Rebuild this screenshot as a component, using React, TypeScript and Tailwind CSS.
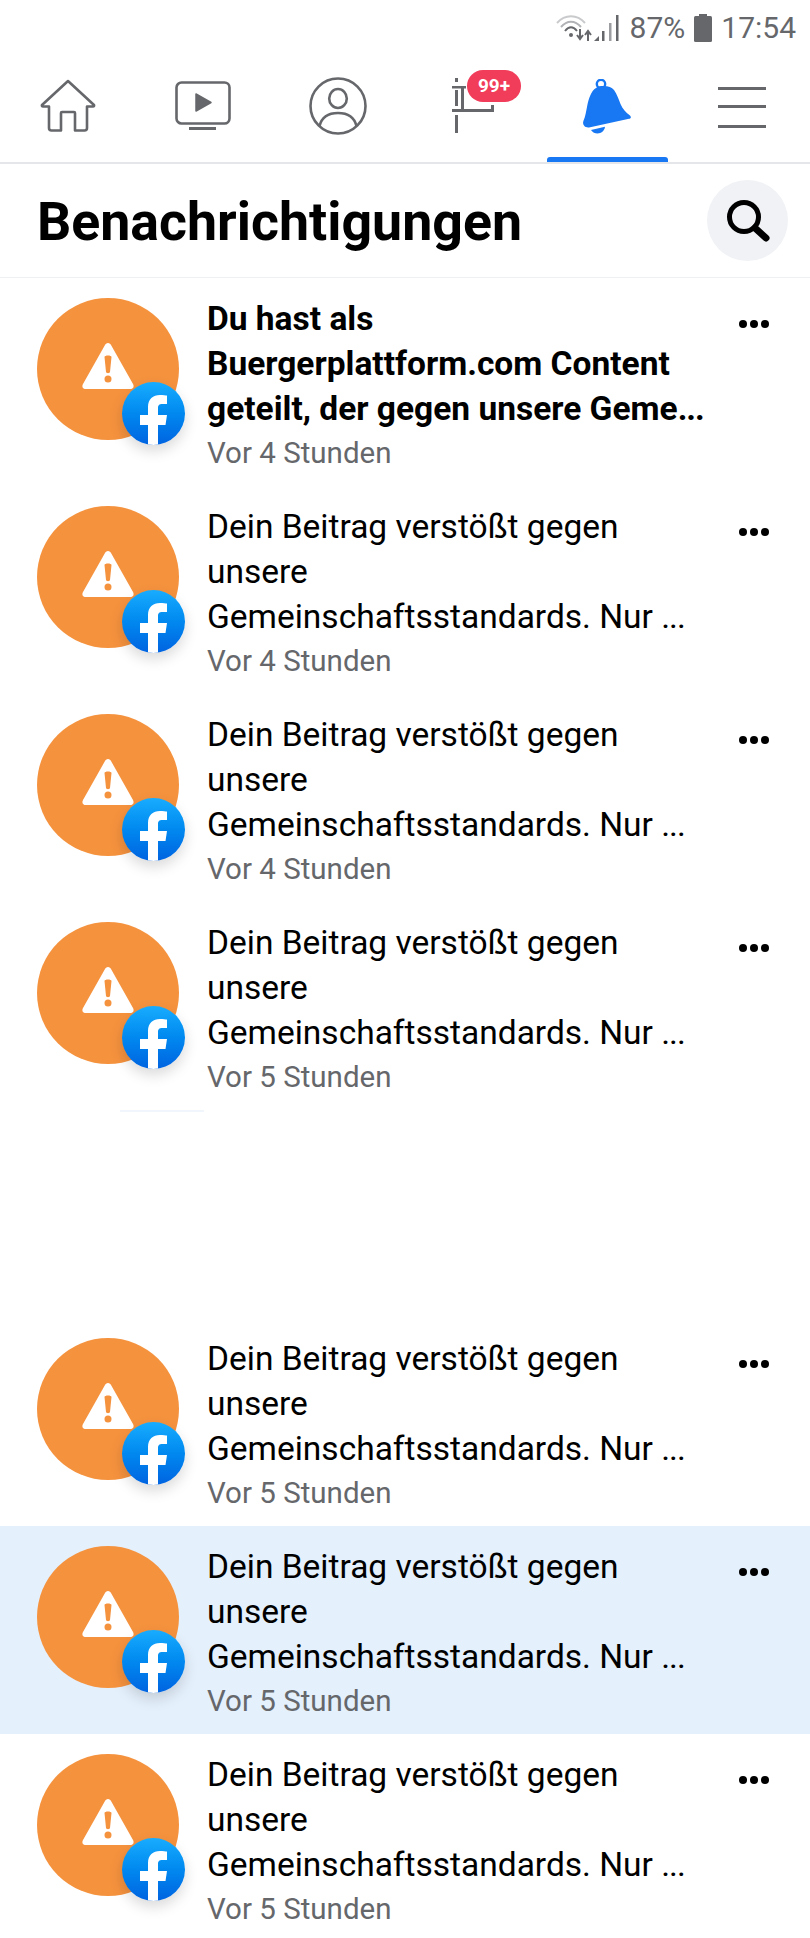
const ROWS = [
  { time: "Vor 4 Stunden", bold: true },
  { time: "Vor 4 Stunden" },
  { time: "Vor 4 Stunden" },
  { time: "Vor 5 Stunden" },
  null,
  { time: "Vor 5 Stunden" },
  { time: "Vor 5 Stunden", unread: true },
  { time: "Vor 5 Stunden" },
];

function HomeIcon() {
  return (
    <svg width="56" height="54" viewBox="0 0 56 54" fill="none" stroke="#65676b" strokeWidth="2.6" strokeLinejoin="round">
      <path d="M28 2 L54 26 Q54.500 27.500 53 27.500 L47 27.500 L47 49 Q47 51.500 44.500 51.500 L35 51.500 L35 34 Q35 33 34 33 L22 33 Q21 33 21 34 L21 51.500 L11.500 51.500 Q9 51.500 9 49 L9 27.500 L3 27.500 Q1.500 27.500 2 26 Z" />
    </svg>
  );
}

function VideoIcon() {
  return (
    <svg width="56" height="50" viewBox="0 0 56 50" fill="none">
      <rect x="1.500" y="1.500" width="53" height="41" rx="5" stroke="#65676b" strokeWidth="2.600" />
      <path d="M21 13 L36 21.500 L21 30 Z" fill="#65676b" stroke="#65676b" strokeWidth="1.500" strokeLinejoin="round" />
      <rect x="14" y="46" width="27" height="3" fill="#65676b" />
    </svg>
  );
}

function ProfileIcon() {
  return (
    <svg width="58" height="58" viewBox="0 0 58 58" fill="none" stroke="#65676b" strokeWidth="2.600">
      <circle cx="29" cy="29" r="27.500" />
      <ellipse cx="29" cy="21.500" rx="8.800" ry="9.500" />
      <path d="M10.500 49 C13 39 20 36 29 36 C38 36 45 39 47.500 49" />
    </svg>
  );
}

function FlagIcon() {
  // half loaded flag from the tab bar, only a few bars of it are visible
  return (
    <svg width="44" height="56" viewBox="0 0 44 56" fill="#65676b">
      <rect x="3" y="0" width="3" height="4" />
      <rect x="0" y="8" width="14" height="2.500" />
      <rect x="3" y="12" width="3" height="16" />
      <rect x="9" y="10" width="3" height="21" />
      <rect x="0" y="31" width="42" height="3" />
      <rect x="39" y="27" width="3" height="5" />
      <rect x="3" y="37" width="3" height="18" />
    </svg>
  );
}

function BellIcon() {
  return (
    <svg width="49" height="55" viewBox="0 0 49 55">
      <circle cx="18" cy="5" r="4.200" fill="none" stroke="#1877f2" strokeWidth="2.400" />
      <path
        fill="#1877f2"
        d="M18 7 C24 6.500 28.500 7.500 31 11 C34 15 35.500 20 37.500 25 C39.500 30 43 33.500 47 36.500 C48.500 38 48 39.500 46 39.800 L6 48.500 C1.500 49 -0.800 45.500 0.400 42 C2.500 37 3 33 4 28 C5.500 20 8 12 13 9 C14.500 8 16 7.200 18 7 Z"
      />
      <path fill="#1877f2" d="M8 51 L22 47.800 C21.500 52 18 54.500 14.500 54.500 C12 54.500 9.500 53.500 8 51 Z" />
    </svg>
  );
}

function MenuIcon() {
  return (
    <div className="flex flex-col w-[48px] mt-[2px] -ml-[2px]">
      <div className="h-[3px] bg-[#65676b]" />
      <div className="h-[3px] bg-[#65676b] mt-[15px]" />
      <div className="h-[3px] bg-[#65676b] mt-[17px]" />
    </div>
  );
}

function SearchIcon() {
  return (
    <svg width="46" height="46" viewBox="0 0 46 46" fill="none" stroke="#000">
      <circle cx="19" cy="19" r="14.500" strokeWidth="5" />
      <path d="M30 30 L41 40" strokeWidth="7" strokeLinecap="round" />
    </svg>
  );
}

function StatusBar() {
  return (
    <div className="h-[50px] flex items-center justify-end pr-[14px] pt-[6px] text-[#65676b] text-[30px] font-['Roboto',sans-serif]">
      <svg width="36" height="28" viewBox="0 0 36 28" fill="none" className="mr-[1px]">
        <path d="M1 9 C9 0 21 0 29 9" stroke="#c9cacc" strokeWidth="2" />
        <path d="M5 13 C11 6 19 6 25 13" stroke="#b0b2b5" strokeWidth="2" />
        <path d="M9 17 C13 12 17 12 21 17" stroke="#65676b" strokeWidth="2" />
        <circle cx="15" cy="21" r="2" fill="#65676b" />
        <path d="M24 15 V24 M21 21 L24 25 L27 21" stroke="#65676b" strokeWidth="2" />
        <path d="M32 27 V18 M29 21 L32 17 L35 21" stroke="#65676b" strokeWidth="2" />
      </svg>
      <svg width="28" height="28" viewBox="0 0 28 28" fill="#65676b" className="mr-[9px]">
        <path d="M1 27 L6 22 V27 Z" />
        <rect x="9" y="17" width="2.500" height="10" />
        <rect x="16" y="9" width="2.500" height="18" fill="#9b9da0" />
        <rect x="23" y="1" width="2.500" height="26" />
      </svg>
      <span className="leading-none">87%</span>
      <svg width="18" height="28" viewBox="0 0 18 28" fill="#65676b" className="mx-[9px]">
        <rect x="5" y="0" width="8" height="3" />
        <rect x="0" y="2" width="18" height="26" rx="1.500" />
      </svg>
      <span className="leading-none">17:54</span>
    </div>
  );
}

function Tab({ children, active }: { children: React.ReactNode; active?: boolean }) {
  return (
    <div className="relative flex-1 flex items-center justify-center h-[112px]">
      {children}
      {active && <div className="absolute bottom-0 left-[7px] right-[7px] h-[5px] rounded-t-[3px] bg-[#1877f2]" />}
    </div>
  );
}

function Avatar() {
  return (
    <div className="relative w-[142px] h-[142px] shrink-0 rounded-full bg-[#f5923e] flex items-center justify-center">
      <svg width="54" height="48" viewBox="0 0 54 48" className="mb-[6px]">
        <path fill="#fff" d="M27 1 C28.500 1 29.500 2 30 3 L52 42 C53.500 45 52 47 49 47 L5 47 C2 47 0.500 45 2 42 L24 3 C24.500 2 25.500 1 27 1 Z" />
        <path fill="#f5923e" d="M23.500 15 C23.500 13 30.500 13 30.500 15 L29 30 C28.900 31.500 25.100 31.500 25 30 Z" />
        <circle cx="27" cy="37" r="3.500" fill="#f5923e" />
      </svg>
      <div className="absolute left-[85px] top-[84px] w-[63px] h-[63px] rounded-full overflow-hidden bg-gradient-to-b from-[#18acfe] to-[#0163e0] shadow-[0_6px_14px_rgba(0,0,0,0.15)]">
        <svg width="63" height="63" viewBox="0 0 63 63">
          <path fill="#fff" d="M26 63 V43 H18 V33 H26 V25 C26 17 31 13 38 13 C41 13 44 13.300 45 13.600 V22 H40.500 C37 22 36 23.500 36 26 V33 H45 L43.500 43 H36 V63 Z" />
        </svg>
      </div>
    </div>
  );
}

function Row({ time, bold, unread }: { time: string; bold?: boolean; unread?: boolean }) {
  return (
    <div className={`h-[208px] flex pl-[37px] ${unread ? "bg-[#e4f0fc]" : "bg-white"}`}>
      <div className="pt-[20px]">
        <Avatar />
      </div>
      <div className={`ml-[28px] w-[531px] pt-[18px] text-black text-[33.500px] leading-[45px] whitespace-nowrap ${bold ? "font-bold" : ""}`}>
        {bold ? (
          <>
            <div>Du hast als</div>
            <div>Buergerplattform.com Content</div>
            <div>geteilt, der gegen unsere Geme<span className="tracking-[-1px]">...</span></div>
          </>
        ) : (
          <>
            <div>Dein Beitrag verstößt gegen</div>
            <div>unsere</div>
            <div>Gemeinschaftsstandards. Nur <span className="tracking-[-1px]">...</span></div>
          </>
        )}
        <div className="text-[#65676b] text-[29.500px] leading-[36px] font-normal mt-[4px]">{time}</div>
      </div>
      <div className="ml-[1px] pt-[42px] flex gap-[3px]">
        <div className="w-[8px] h-[8px] rounded-full bg-black" />
        <div className="w-[8px] h-[8px] rounded-full bg-black" />
        <div className="w-[8px] h-[8px] rounded-full bg-black" />
      </div>
    </div>
  );
}

export default function App() {
  return (
    <div className="w-[810px] h-[1938px] overflow-hidden bg-white font-['Roboto',sans-serif]">
      <StatusBar />
      <div className="flex items-center border-b-[2px] border-[#e4e6e9] h-[114px]">
        <Tab><HomeIcon /></Tab>
        <Tab><VideoIcon /></Tab>
        <Tab><ProfileIcon /></Tab>
        <Tab>
          <div className="relative ml-[3px]">
            <FlagIcon />
            <div className="absolute left-[15px] -top-[8px] w-[54px] h-[32px] rounded-full bg-[#f02849] opacity-90 text-white text-[19px] font-bold flex items-center justify-center">
              99+
            </div>
          </div>
        </Tab>
        <Tab active><BellIcon /></Tab>
        <Tab><MenuIcon /></Tab>
      </div>
      <div className="h-[114px] flex items-center justify-between pl-[37px] pr-[22px] border-b border-[#eef0f2]">
        <h1 className="text-[53.700px] font-bold text-black leading-none pt-[3px]">Benachrichtigungen</h1>
        <div className="w-[81px] h-[81px] rounded-full bg-[#f0f2f5] flex items-center justify-center">
          <SearchIcon />
        </div>
      </div>
      {ROWS.map((r, i) =>
        r ? (
          <Row key={i} time={r.time} bold={r.bold} unread={r.unread} />
        ) : (
          <div key={i} className="h-[208px] bg-white">
            <div className="ml-[120px] w-[84px] h-[2px] bg-[#f1f6fc]" />
          </div>
        )
      )}
    </div>
  );
}
